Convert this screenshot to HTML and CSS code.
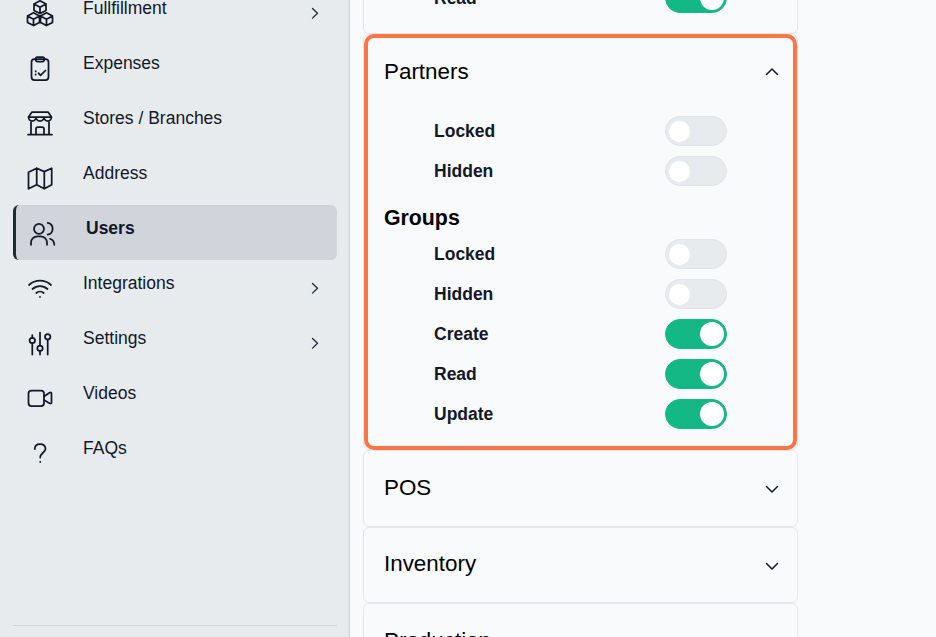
FILE: index.html
```html
<!DOCTYPE html>
<html lang="en">
<head>
<meta charset="utf-8">
<title>Users</title>
<link rel="stylesheet" href="styles.css">
</head>
<body>
<div class="app">
  <aside class="sidebar">
    <nav class="nav">
      <a class="item">
        <svg class="icon" viewBox="0 0 28 28"><path d="M14 1.800l6 3.200v6.400l-6 3.200-6-3.200V5zM8 5l6 3.200L20 5M14 8.200v6.400"/><path d="M7.500 13.800l6 3.200v6.400l-6 3.200-6-3.200V17zM1.500 17l6 3.200 6-3.200M7.500 20.200v6.400"/><path d="M20.500 13.800l6 3.200v6.400l-6 3.200-6-3.200V17zM14.500 17l6 3.200 6-3.200M20.500 20.200v6.400"/></svg>
        <span class="label">Fullfillment</span>
        <svg class="chev" viewBox="0 0 16 16"><path d="M5.500 3.500l5 4.800-5 4.800"/></svg>
      </a>
      <a class="item">
        <svg class="icon" viewBox="0 0 28 28"><rect x="5.500" y="5" width="17" height="21" rx="3"/><rect x="9.500" y="3" width="9" height="4.500" rx="2.200"/><path d="M9.700 17v.4M9.700 20.300v.4M12.500 19.200l2 2.200 5-4.900"/></svg>
        <span class="label">Expenses</span>
      </a>
      <a class="item">
        <svg class="icon" viewBox="0 0 28 28"><path d="M2 25.500h24M5 13v12.500M23 13v12.500M10 25.500V20a2 2 0 0 1 2-2h4a2 2 0 0 1 2 2v5.500"/><path d="M6 3h16l3.500 5H2.500zM2.500 8a3.750 4 0 0 0 7.500 0 4 4 0 0 0 8 0 3.750 4 0 0 0 7.500 0"/></svg>
        <span class="label">Stores / Branches</span>
      </a>
      <a class="item">
        <svg class="icon" viewBox="0 0 28 28"><path d="M2.500 8.200l8.200-4 7.600 3.400 7.400-3.400v16.600l-7.400 4-7.600-4-8.200 4zM10.700 4.200v16.600M18.300 7.600v17.200"/></svg>
        <span class="label">Address</span>
      </a>
      <a class="item active">
        <svg class="icon" viewBox="0 0 28 28"><circle cx="10" cy="9.800" r="5"/><path d="M2 25.800v-2a6.500 6.500 0 0 1 6.500-6.500h3a6.500 6.500 0 0 1 6.500 6.500v2M18.700 3.900a6 6 0 0 1 0 11.800M21 19.800a6.500 6.500 0 0 1 4.300 6"/></svg>
        <span class="label">Users</span>
      </a>
      <a class="item">
        <svg class="icon" viewBox="0 0 28 28"><path d="M3 11a16 16 0 0 1 22 0M6.500 15a11 11 0 0 1 15 0M10.300 19a5.500 5.500 0 0 1 7.400 0M14 22.800v.1"/></svg>
        <span class="label">Integrations</span>
        <svg class="chev" viewBox="0 0 16 16"><path d="M5.500 3.500l5 4.800-5 4.800"/></svg>
      </a>
      <a class="item">
        <svg class="icon" viewBox="0 0 28 28"><circle cx="6.300" cy="11.500" r="2.700"/><circle cx="14" cy="19.200" r="2.700"/><circle cx="21.700" cy="7.800" r="2.700"/><path d="M6.300 6v2.800M6.300 14.200v11.300M14 3.500v13M14 21.900v3.600M21.700 10.500v15"/></svg>
        <span class="label">Settings</span>
        <svg class="chev" viewBox="0 0 16 16"><path d="M5.500 3.500l5 4.800-5 4.800"/></svg>
      </a>
      <a class="item">
        <svg class="icon" viewBox="0 0 28 28"><rect x="2.500" y="6.500" width="15.500" height="15.500" rx="3"/><path d="M18 12.500l5.500-3.700q2-1 2 1v8.400q0 2-2 1L18 16"/></svg>
        <span class="label">Videos</span>
      </a>
      <a class="item">
        <svg class="icon" viewBox="0 0 28 28"><path d="M8.800 10c0-3.500 2.200-5 5.200-5 3.400 0 5.500 2 5.500 5 0 3.200-5.300 4-5.300 8.500M14.200 22.800v.2"/></svg>
        <span class="label">FAQs</span>
      </a>
    </nav>
    <div class="divider"></div>
  </aside>

  <main class="main">
    <div class="accordion">
      <section class="card first">
        <div class="row"><span>Read</span><span class="toggle on"></span></div>
      </section>

      <section class="card open">
        <header class="head">
          <h2>Partners</h2>
          <svg class="fold" viewBox="0 0 16 16"><path d="M2.500 10.500L8 5l5.500 5.500"/></svg>
        </header>
        <div class="row"><span>Locked</span><span class="toggle"></span></div>
        <div class="row"><span>Hidden</span><span class="toggle"></span></div>
        <h3>Groups</h3>
        <div class="row"><span>Locked</span><span class="toggle"></span></div>
        <div class="row"><span>Hidden</span><span class="toggle"></span></div>
        <div class="row"><span>Create</span><span class="toggle on"></span></div>
        <div class="row"><span>Read</span><span class="toggle on"></span></div>
        <div class="row"><span>Update</span><span class="toggle on"></span></div>
      </section>

      <section class="card closed">
        <header class="head"><h2>POS</h2><svg class="fold" viewBox="0 0 16 16"><path d="M2.500 5.500L8 11l5.500-5.500"/></svg></header>
      </section>
      <section class="card closed">
        <header class="head"><h2>Inventory</h2><svg class="fold" viewBox="0 0 16 16"><path d="M2.500 5.500L8 11l5.500-5.500"/></svg></header>
      </section>
      <section class="card closed">
        <header class="head"><h2>Production</h2><svg class="fold" viewBox="0 0 16 16"><path d="M2.500 5.500L8 11l5.500-5.500"/></svg></header>
      </section>
    </div>
  </main>
</div>
</body>
</html>
```

FILE: styles.css
```css
* { box-sizing: border-box; }

html, body {
  margin: 0;
  height: 100%;
  overflow: hidden;
}

body {
  background: #f9fafb;
  color: #111827;
  font-family: "Liberation Sans", Arial, sans-serif;
}

.app {
  display: flex;
  height: 637px;
  overflow: hidden;
}

/* Sidebar */
.sidebar {
  flex: 0 0 350px;
  display: flex;
  flex-direction: column;
  height: 637px;
  background: #e7ebee;
  border-right: 1px solid #d1d5db;
  overflow: hidden;
}

.nav {
  display: flex;
  flex-direction: column;
  flex: 1;
  margin-top: -15px;
}

.item {
  display: flex;
  align-items: center;
  flex: 0 0 55px;
  width: 324px;
  margin-left: 13px;
  padding: 0 14px 0 13px;
  font-size: 17.500px;
  line-height: 24px;
  color: #111827;
}

.item.active {
  background: #d1d5db;
  border-left: 3px solid #1f2937;
  border-radius: 6px;
  font-weight: 700;
  color: #111827;
}

.icon {
  flex: 0 0 28px;
  width: 28px;
  height: 28px;
  margin-right: 29px;
  fill: none;
  stroke: #111827;
  stroke-width: 1.750;
  stroke-linecap: round;
  stroke-linejoin: round;
}

.label {
  margin-bottom: 10px;
}

.chev {
  width: 16px;
  height: 16px;
  margin-left: auto;
  fill: none;
  stroke: #1f2937;
  stroke-width: 1.300;
  stroke-linecap: round;
  stroke-linejoin: round;
}

.divider {
  height: 1px;
  margin: 0 12px 11px 13px;
  border-top: 1px solid #d1d5db;
}

/* Main */
.main {
  flex: 1;
  padding-left: 13px;
  overflow: hidden;
}

.accordion {
  display: flex;
  flex-direction: column;
  width: 435px;
  margin-top: -22px;
}

.card {
  position: relative;
  flex: none;
  background: #f9fafb;
  border: 1px solid #e5e7eb;
  border-radius: 6px;
}

.card.first {
  height: 56px;
  border-top: 0;
  border-radius: 0 0 6px 6px;
}

.card.open {
  height: 416px;
}

.card.open::after {
  content: "";
  position: absolute;
  inset: -1px 0 -1px 0;
  border: 4px solid #ff7449;
  border-radius: 10px;
  pointer-events: none;
}

.card.closed {
  height: 76.500px;
}

.head {
  display: flex;
  align-items: center;
  justify-content: space-between;
  height: 73px;
  padding: 0 17px 0 20px;
}

.card.closed .head {
  height: 73.500px;
}

.fold {
  width: 16px;
  height: 16px;
  fill: none;
  stroke: #111827;
  stroke-width: 1.500;
  stroke-linecap: round;
  stroke-linejoin: round;
}

.card.closed .fold {
  margin-top: 3px;
}

h2 {
  margin: 0;
  font-size: 22.400px;
  font-weight: 400;
  line-height: 28px;
  color: #000;
}

h3 {
  margin: 13px 0 2px 20px;
  font-size: 21.300px;
  font-weight: 700;
  line-height: 28px;
  color: #000;
}

.row {
  display: flex;
  align-items: center;
  height: 40px;
  padding-left: 70px;
  font-size: 17.500px;
  font-weight: 700;
  line-height: 24px;
  color: #111827;
}

.open .head + .row {
  margin-top: 3px;
}

.row span:first-child {
  flex: 0 0 231px;
}

.toggle {
  display: flex;
  align-items: center;
  width: 62px;
  height: 30px;
  padding-left: 3px;
  background: #e7ebee;
  border: 1px solid #e0e3e7;
  border-radius: 15px;
}

.toggle::before {
  content: "";
  width: 21px;
  height: 21px;
  background: #fff;
  border-radius: 50%;
}

.toggle.on {
  justify-content: flex-end;
  padding: 0 2px 0 0;
  background: #14b885;
  border-color: #14b885;
}

.toggle.on::before {
  width: 24px;
  height: 24px;
}
```
